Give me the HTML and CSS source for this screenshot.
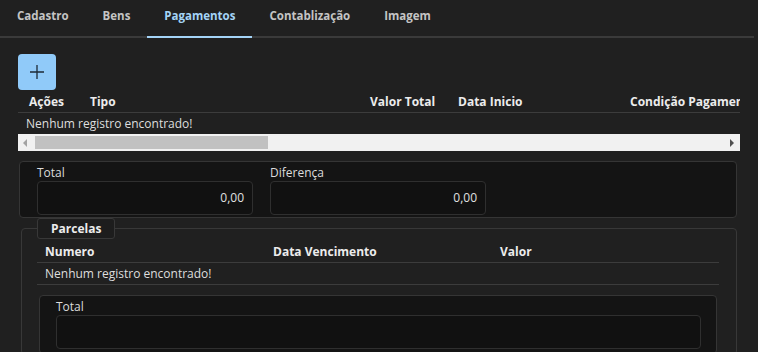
FILE: index.html
```html
<!DOCTYPE html>
<html lang="pt-BR">
  <head>
    <meta charset="UTF-8" />
    <title>Pagamentos</title>
    <link rel="stylesheet" href="styles.css">
  </head>
  <body>
    <div class="tabs">
      <div class="tab">Cadastro</div>
      <div class="tab">Bens</div>
      <div class="tab active">Pagamentos</div>
      <div class="tab">Contablização</div>
      <div class="tab">Imagem</div>
    </div>

    <div class="page">
      <button class="add-btn" title="Adicionar">
        <svg width="16" height="16" viewBox="0 0 16 16">
          <path d="M8 1v14M1 8h14" stroke="#1d2a36" stroke-width="1.3" fill="none" />
        </svg>
      </button>

      <div class="grid">
        <div class="grid-head pay-cols">
          <div>Ações</div>
          <div>Tipo</div>
          <div>Valor Total</div>
          <div>Data Inicio</div>
          <div>Condição Pagamento</div>
        </div>
        <div class="grid-empty">Nenhum registro encontrado!</div>
        <div class="hscroll">
          <span class="arrow left"></span>
          <div class="thumb"></div>
          <span class="arrow right"></span>
        </div>
      </div>

      <div class="box totals">
        <div class="field">
          <label>Total</label>
          <div class="input">0,00</div>
        </div>
        <div class="field">
          <label>Diferença</label>
          <div class="input">0,00</div>
        </div>
      </div>

      <fieldset class="parcelas">
        <legend>Parcelas</legend>
        <div class="grid-head parc-cols">
          <div>Numero</div>
          <div>Data Vencimento</div>
          <div>Valor</div>
        </div>
        <div class="grid-empty inner">Nenhum registro encontrado!</div>
        <div class="box sub-total">
          <div class="field wide">
            <label>Total</label>
            <div class="input"></div>
          </div>
        </div>
      </fieldset>
    </div>
  </body>
</html>
```

FILE: styles.css
```css
body {
  margin: 0;
  background: #202020;
  color: #e2e2e2;
  font-family: "Open Sans", "Noto Sans", sans-serif;
  font-size: 12px;
  overflow: hidden;
}
.tabs {
  display: flex;
  height: 36px;
  border-bottom: 2px solid #3a3a3a;
  margin-right: 4px;
}
.tab {
  padding: 0 17px;
  line-height: 31px;
  font-weight: 700;
  font-size: 11.5px;
  color: #c4c4c4;
}
.tab.active {
  color: #a4d4f7;
  border-bottom: 2px solid #a4d4f7;
  margin-bottom: -2px;
}
.page {
  padding: 16px 18px 0 18px;
}
.add-btn {
  width: 38px;
  height: 36px;
  border: none;
  border-radius: 4px;
  background: #90caf9;
  display: flex;
  align-items: center;
  justify-content: center;
  padding: 0;
}
.grid {
  width: 722px;
  overflow: hidden;
}
.grid-head {
  display: grid;
  height: 22px;
  align-items: center;
  font-weight: 700;
  font-size: 12px;
  color: #ececec;
  border-bottom: 1px solid #3c3c3c;
  white-space: nowrap;
  overflow: hidden;
}
.pay-cols {
  grid-template-columns: 61px 280px 88px 172px 160px;
}
.pay-cols div {
  padding-left: 11px;
}
.grid-empty {
  height: 21px;
  line-height: 21px;
  padding-left: 8px;
  font-size: 12px;
  color: #dedede;
}
.hscroll {
  height: 17px;
  background: #f1f1f1;
  display: flex;
  align-items: center;
  gap: 8px;
  padding: 0 6px 0 5px;
}
.thumb {
  width: 233px;
  height: 13px;
  background: #c1c1c1;
}
.arrow {
  width: 0;
  height: 0;
  border-top: 4px solid transparent;
  border-bottom: 4px solid transparent;
}
.arrow.left {
  border-right: 4px solid #a3a3a3;
}
.arrow.right {
  border-left: 4px solid #505050;
  margin-left: auto;
}
.box {
  background: #141414;
  border: 1px solid #353535;
  border-radius: 4px;
}
.totals {
  margin: 10px 3px 0 1px;
  padding: 2px 17px 2px 17px;
  display: flex;
  gap: 17px;
}
.field label {
  display: block;
  line-height: 17px;
  font-size: 12px;
  color: #dcdcdc;
}
.input {
  width: 198px;
  height: 32px;
  line-height: 32px;
  padding: 0 8px;
  text-align: right;
  background: #111111;
  border: 1px solid #2f2f2f;
  border-radius: 4px;
  font-size: 12px;
  color: #e0e0e0;
}
.parcelas {
  margin: 0 3px 0 3px;
  padding: 2px 17px 0 15px;
  border: 1px solid #383838;
  border-radius: 4px;
}
.parcelas legend {
  padding: 0 13px;
  height: 19px;
  line-height: 19px;
  border: 1px solid #383838;
  border-radius: 3px;
  background: #1d1d1d;
  font-weight: 700;
  font-size: 12px;
  color: #ececec;
}
.parc-cols {
  grid-template-columns: 228px 227px 1fr;
  height: 21px;
}
.parc-cols div {
  padding-left: 8px;
}
.grid-empty.inner {
  border-bottom: 1px solid #3c3c3c;
}
.sub-total {
  margin: 10px 2px 0 2px;
  padding: 2px 15px 4px 16px;
}
.field.wide {
  flex: 1;
}
.field.wide .input {
  width: auto;
}
```
